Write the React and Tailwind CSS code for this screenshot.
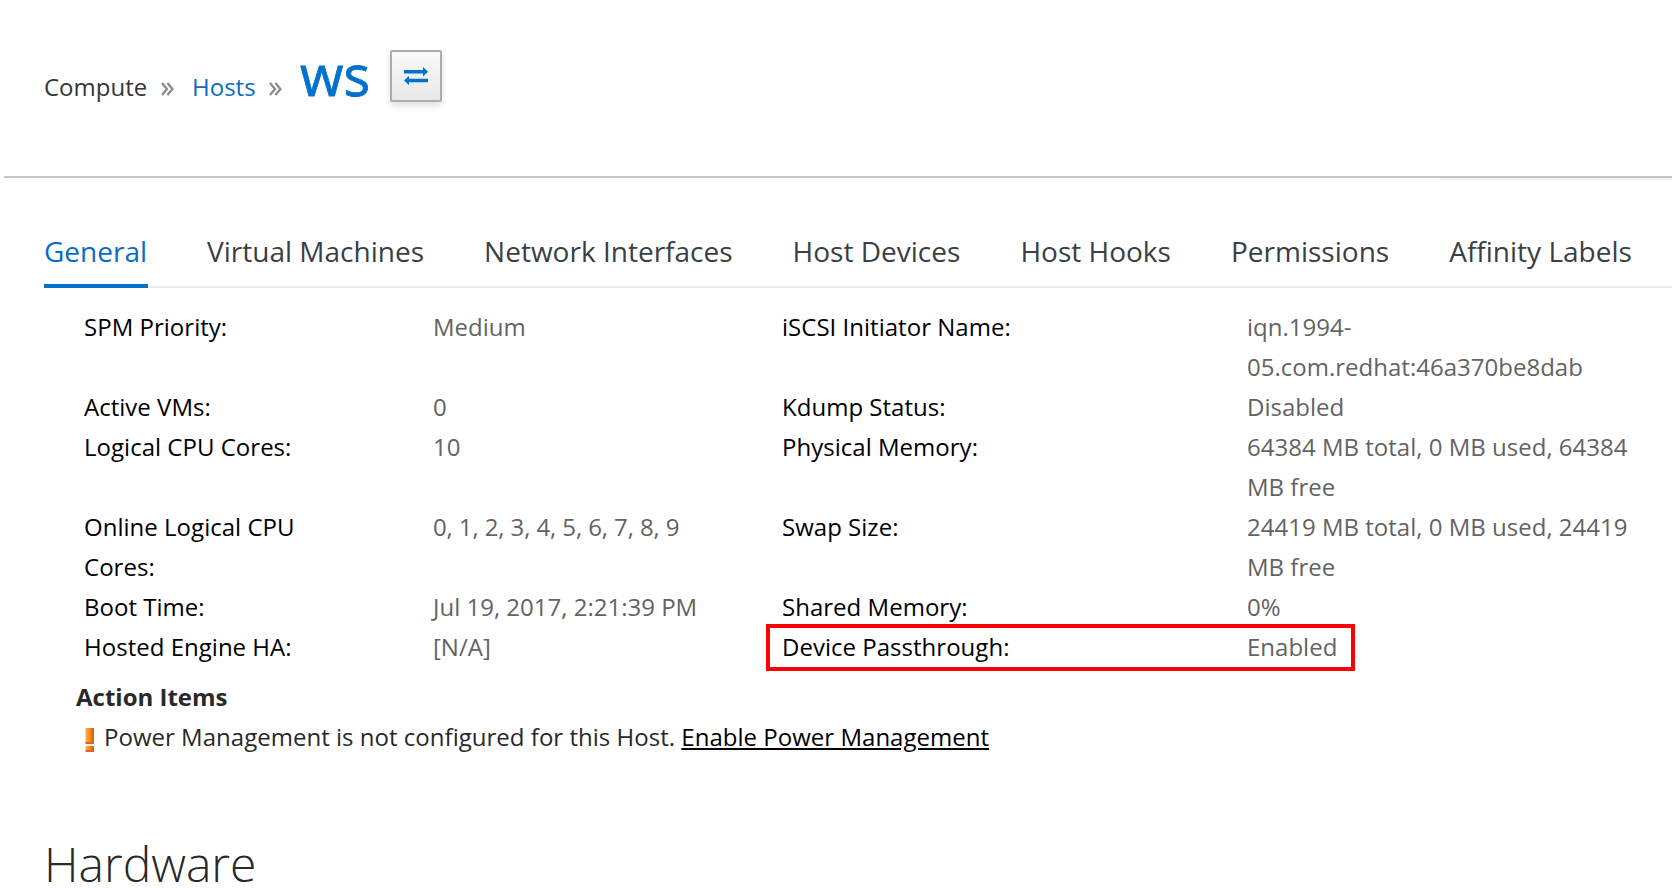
const tabs = [
  "General",
  "Virtual Machines",
  "Network Interfaces",
  "Host Devices",
  "Host Hooks",
  "Permissions",
  "Affinity Labels",
];

const rows = [
  ["SPM Priority:", "Medium", "iSCSI Initiator Name:", "iqn.1994-05.com.redhat:46a370be8dab"],
  ["Active VMs:", "0", "Kdump Status:", "Disabled"],
  ["Logical CPU Cores:", "10", "Physical Memory:", "64384 MB total, 0 MB used, 64384 MB free"],
  ["Online Logical CPU Cores:", "0, 1, 2, 3, 4, 5, 6, 7, 8, 9", "Swap Size:", "24419 MB total, 0 MB used, 24419 MB free"],
  ["Boot Time:", "Jul 19, 2017, 2:21:39 PM", "Shared Memory:", "0%"],
  ["Hosted Engine HA:", "[N/A]", "Device Passthrough:", "Enabled"],
];

function Chevrons({ className }) {
  return (
    <svg viewBox="0 0 13 14" className={`h-[14px] w-[13px] shrink-0 ${className}`} fill="none" stroke="#8b8b8b" strokeWidth="2.3">
      <path d="M1 1l5 6L1 13M6.4 1l5 6-5 6" />
    </svg>
  );
}

export default function App() {
  return (
    <div className="h-[888px] w-[1672px] overflow-hidden bg-white font-['Open_Sans',sans-serif] text-[24px] leading-[40px] text-[#292929]">
      <header className="ml-1 flex h-[178px] items-start border-b-2 border-[#c4c4c4] pl-10">
        <span className="mt-[67px] w-[117px] whitespace-nowrap text-[#363636]">Compute</span>
        <Chevrons className="mt-[82px]" />
        <a className="mt-[67px] ml-[18px] w-[77px] whitespace-nowrap text-[#0a6cc8]">Hosts</a>
        <Chevrons className="mt-[82px]" />
        <h1 className="mt-[54px] ml-[18px] w-[90px] text-[56px] font-medium text-[#0072cc] [-webkit-text-stroke:0.8px_#0072cc]">ws</h1>
        <button className="mt-[50px] flex size-[52px] items-center justify-center rounded-[2px] border-2 border-[#acacac] bg-linear-to-b from-[#fafafa] to-[#e8e8e8] shadow-[0_4px_6px_rgba(0,0,0,0.12)]">
          <svg viewBox="0 0 24 18" className="h-[18px] w-6" fill="#0072cc">
            <path d="M0 3h19V0l5 4.7L19 9.4V6.5H0zM24 11.7H5V8.8l-5 4.6L5 18v-2.8h19z" />
          </svg>
        </button>
      </header>
      <div className="ml-[1440px] h-[2px] bg-[#f0f0f0]" />

      <nav className="ml-11 flex h-[108px] items-end gap-[60px] border-b-2 border-[#ebebeb] text-[28px] tracking-[0.01px] text-[#393f44]">
        {tabs.map((tab, i) => (
          <a
            key={tab}
            className={
              i === 0
                ? "-mr-px -mb-[2px] h-[57px] w-[104px] border-b-4 border-[#0072cc] whitespace-nowrap text-[#0a6cc8]"
                : "-mb-[2px] h-[57px] whitespace-nowrap"
            }
          >
            {tab}
          </a>
        ))}
      </nav>

      <div className="relative mt-[19px] ml-[84px]">
        {rows.map((row) => (
          <div key={row[0]} className="grid grid-cols-[349px_349px_465px_400px]">
            <span className="pr-[100px] tracking-[0.02px] text-black">{row[0]}</span>
            <span className={row[1].startsWith("0,") ? "tracking-[-0.1px] text-[#636363]" : "text-[#636363]"}>{row[1]}</span>
            <span className="tracking-[0.02px] text-black">{row[2]}</span>
            <span className="tracking-[0.01px] text-[#636363]">{row[3]}</span>
          </div>
        ))}
        <div className="absolute -bottom-1 left-[682px] h-[47px] w-[589px] border-4 border-[#ff0000]" />
      </div>

      <section className="mt-[10px] ml-[76px]">
        <h2 className="font-bold">Action Items</h2>
        <div className="flex items-start pl-[9px]">
          <svg viewBox="0 0 9 24" className="mt-[11px] mr-[10px] h-6 w-[9px]">
            <defs>
              <linearGradient id="warn" x1="0" x2="1" y1="0" y2="0">
                <stop offset="0" stopColor="#ffb04d" />
                <stop offset="0.45" stopColor="#ff8f12" />
                <stop offset="1" stopColor="#cf5a22" />
              </linearGradient>
            </defs>
            <path d="M0.5 0h8.5v15.5H0.5z" fill="url(#warn)" />
            <path d="M0.5 14h8.5v2H0.5z" fill="#d9652b" />
            <path d="M0.5 18h8.5v4H0.5z" fill="url(#warn)" />
            <path d="M0.5 22h8.5v2H0.5z" fill="#d9652b" />
          </svg>
          <p className="tracking-[0.02px]">
            Power Management is not configured for this Host. <a className="text-black underline">Enable Power Management</a>
          </p>
        </div>
      </section>

      <h2 className="mt-[83px] ml-11 text-[48px] leading-[48px] font-light">Hardware</h2>
    </div>
  );
}
